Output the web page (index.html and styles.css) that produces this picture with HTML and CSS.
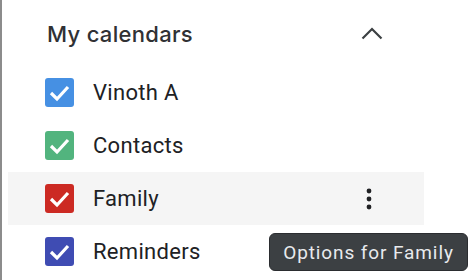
FILE: index.html
```html
<!DOCTYPE html>
<html lang="en">
<head>
    <meta charset="UTF-8">
    <title>My calendars</title>
    <link rel="stylesheet" href="styles.css">
</head>
<body>
    <div class="sidebar">
        <div class="section-header">
            <h2>My calendars</h2>
            <button class="icon-btn collapse" aria-label="Collapse">
                <svg width="24" height="24" viewBox="0 0 24 24"><polyline points="2.5,16.5 12,7 21.5,16.5" fill="none" stroke="#3c4043" stroke-width="2.2"/></svg>
            </button>
        </div>
        <ul class="calendar-list">
            <li class="calendar-item">
                <span class="checkbox blue"><svg viewBox="0 0 29 29"><polyline points="6,15 12,21 23,9"/></svg></span>
                <span class="name">Vinoth A</span>
            </li>
            <li class="calendar-item">
                <span class="checkbox green"><svg viewBox="0 0 29 29"><polyline points="6,15 12,21 23,9"/></svg></span>
                <span class="name">Contacts</span>
            </li>
            <li class="calendar-item hovered">
                <span class="checkbox red"><svg viewBox="0 0 29 29"><polyline points="6,15 12,21 23,9"/></svg></span>
                <span class="name">Family</span>
                <button class="icon-btn more" aria-label="Options for Family">
                    <svg width="24" height="24" viewBox="0 0 24 24">
                        <circle cx="12" cy="4" r="2.4"/>
                        <circle cx="12" cy="12" r="2.4"/>
                        <circle cx="12" cy="20" r="2.4"/>
                    </svg>
                </button>
                <div class="tooltip">Options for Family</div>
            </li>
            <li class="calendar-item">
                <span class="checkbox indigo"><svg viewBox="0 0 29 29"><polyline points="6,15 12,21 23,9"/></svg></span>
                <span class="name">Reminders</span>
            </li>
        </ul>
    </div>
</body>
</html>
```

FILE: styles.css
```css
html, body {
    margin: 0;
    height: 100%;
    background: #fff;
}
body {
    border-left: 2px solid #8c8c8c;
    box-sizing: border-box;
    padding-left: 6px;
    overflow: hidden;
}
.sidebar {
    width: 416px;
    font-family: Roboto, "Liberation Sans", sans-serif;
    color: #202124;
}
.section-header {
    display: flex;
    align-items: center;
    justify-content: space-between;
    height: 66px;
    padding: 2px 40px 0 39px;
    box-sizing: border-box;
}
.section-header h2 {
    margin: 0;
    font-family: Inter, Roboto, sans-serif;
    font-size: 22px;
    font-weight: 500;
    letter-spacing: 0.3px;
    color: #303134;
    line-height: 28px;
}
.icon-btn {
    border: none;
    background: none;
    padding: 0;
    width: 24px;
    height: 24px;
    display: flex;
}
.calendar-list {
    list-style: none;
    margin: 0;
    padding: 0;
}
.calendar-item {
    position: relative;
    display: flex;
    align-items: center;
    height: 53px;
    padding-left: 37px;
}
.calendar-item.hovered {
    background: #f5f5f5;
}
.checkbox {
    width: 29px;
    height: 29px;
    border-radius: 3px;
    margin-right: 19px;
    display: flex;
}
.checkbox svg {
    width: 29px;
    height: 29px;
}
.checkbox polyline {
    fill: none;
    stroke: #fff;
    stroke-width: 3.2;
}
.checkbox.blue { background: #4690e3; }
.checkbox.green { background: #52b47e; }
.checkbox.red { background: #cc2a23; }
.checkbox.indigo { background: #3f4cb3; }
.name {
    font-size: 22px;
    letter-spacing: 0.3px;
    color: #202124;
    flex: 1;
}
.more {
    margin-right: 43px;
}
.more circle {
    fill: #202124;
}
.tooltip {
    position: absolute;
    top: 61px;
    right: -44px;
    width: 199px;
    height: 38px;
    box-sizing: border-box;
    background: #3c4043;
    border: 1px solid #2b2d30;
    border-radius: 6px;
    color: #e8eaed;
    font-size: 19px;
    letter-spacing: 0.9px;
    display: flex;
    align-items: center;
    justify-content: center;
    z-index: 2;
}
```
